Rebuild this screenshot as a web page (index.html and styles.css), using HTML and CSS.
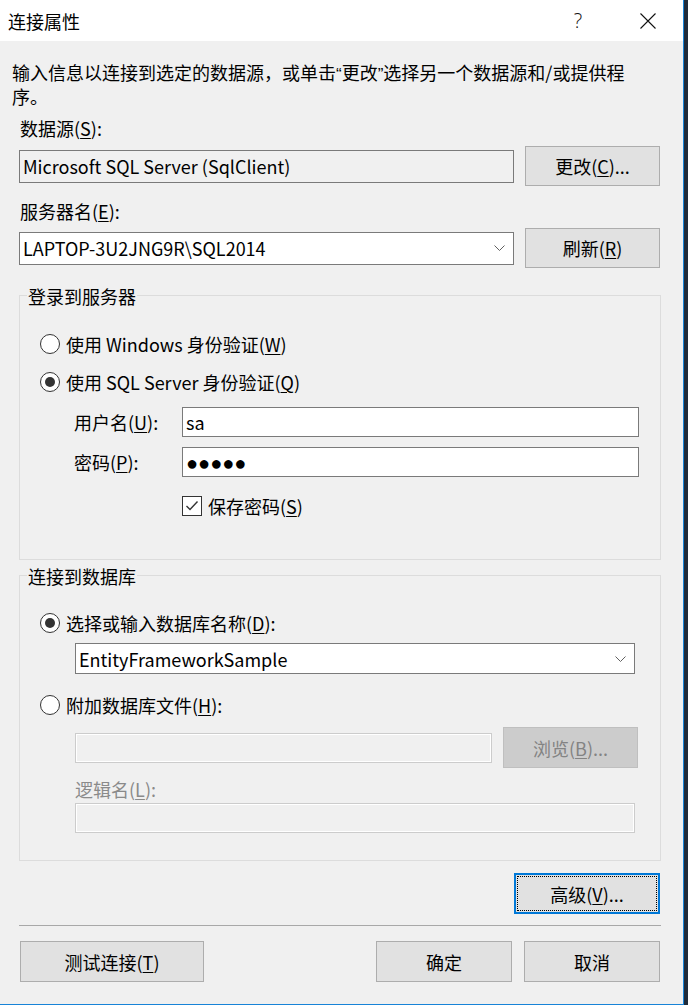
FILE: index.html
```html
<!DOCTYPE html>
<html lang="zh-CN">
<head>
<meta charset="utf-8">
<title>连接属性</title>
<link rel="stylesheet" href="styles.css">
</head>
<body>
<div class="window">
  <div class="titlebar">
    <div class="title">连接属性</div>
    <div class="tb-btn help">?</div>
    <div class="tb-btn close">
      <svg width="16" height="16" viewBox="0 0 16 16"><path d="M0.5 0.5 L15.5 15.5 M15.5 0.5 L0.5 15.5" stroke="#111" stroke-width="1.1" fill="none"/></svg>
    </div>
  </div>
  <div class="body">
    <p class="desc">输入信息以连接到选定的数据源，或单击<span class="q">“</span>更改<span class="q">”</span>选择另一个数据源和/或提供程<br>序。</p>
    <div class="content">
      <div class="label l1">数据源(<u>S</u>):</div>
      <div class="row r1">
        <div class="textbox readonly wide">Microsoft SQL Server (SqlClient)</div>
        <div class="btn side">更改(<u>C</u>)...</div>
      </div>
      <div class="label l2">服务器名(<u>E</u>):</div>
      <div class="row r2">
        <div class="combo wide">
          <span>LAPTOP-3U2JNG9R\SQL2014</span>
          <svg class="chev" width="11" height="6" viewBox="0 0 11 6"><path d="M0.5 0.5 L5.5 5.5 L10.5 0.5" stroke="#606060" stroke-width="1" fill="none"/></svg>
        </div>
        <div class="btn side">刷新(<u>R</u>)</div>
      </div>

      <div class="group g1">
        <div class="legend">登录到服务器</div>
        <div class="opt o1"><span class="radio"></span><span>使用 Windows 身份验证(<u>W</u>)</span></div>
        <div class="opt o2"><span class="radio on"></span><span>使用 SQL Server 身份验证(<u>Q</u>)</span></div>
        <div class="field f1">
          <span class="flabel">用户名(<u>U</u>):</span>
          <div class="input">sa</div>
        </div>
        <div class="field f2">
          <span class="flabel">密码(<u>P</u>):</span>
          <div class="input"><span class="dots">●●●●●</span></div>
        </div>
        <div class="check-row">
          <span class="checkbox"><svg width="18" height="18" viewBox="0 0 18 18"><path d="M3.5 9 L7 12.5 L14.5 4.5" stroke="#333" stroke-width="1.4" fill="none"/></svg></span>
          <span>保存密码(<u>S</u>)</span>
        </div>
      </div>

      <div class="group g2">
        <div class="legend">连接到数据库</div>
        <div class="opt o3"><span class="radio on"></span><span>选择或输入数据库名称(<u>D</u>):</span></div>
        <div class="combo db">
          <span>EntityFrameworkSample</span>
          <svg class="chev" width="11" height="6" viewBox="0 0 11 6"><path d="M0.5 0.5 L5.5 5.5 L10.5 0.5" stroke="#606060" stroke-width="1" fill="none"/></svg>
        </div>
        <div class="opt o4"><span class="radio"></span><span>附加数据库文件(<u>H</u>):</span></div>
        <div class="file-row">
          <div class="input disabled file"></div>
          <div class="btn disabled-btn browse">浏览(<u>B</u>)...</div>
        </div>
        <div class="dlabel">逻辑名(<u>L</u>):</div>
        <div class="input disabled logic"></div>
      </div>

      <div class="adv-row">
        <div class="btn adv">高级(<u>V</u>)...</div>
      </div>
      <div class="sep"></div>
      <div class="bottom-row">
        <div class="btn test">测试连接(<u>T</u>)</div>
        <div class="spacer"></div>
        <div class="btn ok">确定</div>
        <div class="btn cancel">取消</div>
      </div>
    </div>
  </div>
</div>
</body>
</html>
```

FILE: styles.css
```css
* { box-sizing: border-box; }
html, body { margin: 0; padding: 0; }
body {
  width: 688px;
  height: 1005px;
  overflow: hidden;
  background: #1f2b3a;
  font-family: "Noto Sans CJK SC", "Microsoft YaHei", sans-serif;
  font-size: 18px;
  color: #000;
}
u { text-decoration-thickness: 1px; text-underline-offset: 2px; }

.window {
  width: 684px;
  height: 1005px;
  background: #f0f0f0;
  border-right: 1px solid #1883d7;
  border-bottom: 1px solid #1883d7;
}

.titlebar {
  height: 41px;
  background: #fff;
  display: flex;
  align-items: center;
}
.title { padding-left: 8px; line-height: 24px; flex: 1; }
.tb-btn {
  width: 46px;
  height: 41px;
  display: flex;
  align-items: center;
  justify-content: center;
}
.help { font-family: "Open Sans", sans-serif; font-weight: 300; font-size: 20px; color: #111; margin-right: 24px; }
.close { margin-right: 12px; }

.body { padding-top: 19px; }
.desc { margin: 0 0 0 12px; line-height: 24px; height: 48px; }
.q { font-family: "Liberation Sans", sans-serif; font-size: 17px; line-height: 0; }

.content { margin-left: 19px; width: 642px; }
.label { line-height: 24px; padding-left: 1px; }
.l1 { margin-top: 8px; }
.l2 { margin-top: 13px; }

.row { display: flex; align-items: center; height: 40px; }
.r1 { margin-top: 6px; }
.r2 { margin-top: 5px; }

.textbox, .combo, .input {
  border: 1px solid #7a7a7a;
  background: #fff;
  padding-left: 3px;
  white-space: nowrap;
}
.wide { width: 495px; height: 33px; }
.textbox { line-height: 31px; }
.readonly { background: #f0f0f0; }
.combo {
  display: flex;
  align-items: center;
  justify-content: space-between;
  padding-right: 8px;
}

.btn {
  display: flex;
  align-items: center;
  justify-content: center;
  background: #e1e1e1;
  border: 1px solid #adadad;
  white-space: nowrap;
}
.side { width: 135px; height: 40px; margin-left: 11px; }

.group {
  border: 1px solid #dcdcdc;
  padding-left: 20px;
}
.g1 { margin-top: 27px; height: 265px; }
.g2 { margin-top: 15px; height: 286px; }
.legend {
  width: fit-content;
  margin-top: -12px;
  margin-left: -13px;
  padding: 0 1px;
  line-height: 24px;
  background: #f0f0f0;
}

.opt { display: flex; align-items: center; gap: 6px; height: 24px; line-height: 24px; }
.o1 { margin-top: 24px; }
.o2 { margin-top: 14px; }
.o3 { margin-top: 23px; }
.o4 { margin-top: 19px; }

.radio {
  width: 20px;
  height: 20px;
  border: 1px solid #333;
  border-radius: 50%;
  background: #fff;
  display: flex;
  align-items: center;
  justify-content: center;
}
.radio.on::after {
  content: "";
  width: 10px;
  height: 10px;
  border-radius: 50%;
  background: #333;
}

.field { display: flex; align-items: center; padding-left: 34px; height: 30px; }
.f1 { margin-top: 13px; }
.f2 { margin-top: 10px; }
.flabel { width: 108px; line-height: 24px; }
.field .input { width: 457px; height: 30px; line-height: 28px; }
.dots {
  font-family: "Liberation Sans", sans-serif;
  font-size: 20px;
  letter-spacing: 0;
}

.check-row {
  display: flex;
  align-items: center;
  gap: 6px;
  margin-top: 19px;
  padding-left: 142px;
  height: 20px;
  line-height: 24px;
}
.checkbox {
  width: 20px;
  height: 20px;
  border: 1px solid #333;
  background: #fff;
  display: flex;
}

.db { margin-top: 8px; margin-left: 35px; width: 560px; height: 31px; }

.file-row { display: flex; align-items: center; margin-top: 10px; padding-left: 35px; height: 41px; }
.input.disabled {
  background: #f0f0f0;
  border: 1px solid #cccccc;
  box-shadow: inset 0 0 0 1px #fff;
}
.file { width: 417px; height: 30px; }
.disabled-btn { background: #cccccc; border-color: #bfbfbf; color: #838383; }
.browse { width: 135px; height: 41px; margin-left: 11px; }
.dlabel { margin-top: 9px; margin-left: 35px; line-height: 24px; color: #8a8a8a; }
.logic { margin-top: 2px; margin-left: 35px; width: 560px; height: 30px; }

.adv-row { display: flex; justify-content: flex-end; margin-top: 12px; padding-right: 1px; }
.adv {
  width: 146px;
  height: 41px;
  border: 2px solid #0078d7;
  outline: 1px dotted #000;
  outline-offset: -4px;
}

.sep { margin-top: 11px; height: 1px; background: #a8a8a8; }

.bottom-row { display: flex; margin-top: 15px; height: 41px; padding-left: 1px; padding-right: 1px; }
.test { width: 184px; }
.spacer { flex: 1; }
.ok { width: 136px; }
.cancel { width: 136px; margin-left: 12px; }
```
